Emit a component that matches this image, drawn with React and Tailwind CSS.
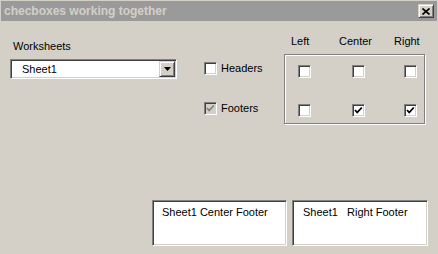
const sunken =
  "border border-t-[#808080] border-l-[#808080] border-b-white border-r-white shadow-[inset_1px_1px_0_#404040,inset_-1px_-1px_0_#d4d0c8]";
const raised =
  "border border-t-[#d4d0c8] border-l-[#d4d0c8] border-b-[#404040] border-r-[#404040] shadow-[inset_1px_1px_0_#ffffff,inset_-1px_-1px_0_#808080]";

const Check = ({ color = "#000" }) => (
  <svg width="9" height="9" viewBox="0 0 9 9" className="block">
    <polyline points="1,4 3.2,6.5 7.8,1.5" fill="none" stroke={color} strokeWidth="1.8" />
  </svg>
);

const Checkbox = ({ checked, disabled }) => (
  <div
    className={`flex h-[13px] w-[13px] shrink-0 items-center justify-center box-border ${sunken} ${
      disabled ? "bg-[#d4d0c8]" : "bg-white"
    }`}
  >
    {checked && <Check color={disabled ? "#808080" : "#000"} />}
  </div>
);

export default function App() {
  return (
    <div
      className="flex h-[254px] w-[438px] flex-col bg-[#d4d0c8] text-[11px] leading-[13px] text-black"
      style={{ fontFamily: '"Liberation Sans", Arial, sans-serif' }}
    >
      <div className="mx-[1px] mt-[1px] flex h-[20px] items-center justify-between bg-[#9a9a9a] pl-[3px] pr-[3px]">
        <span className="text-[12px] font-bold text-[#d4d0c8]">checboxes working together</span>
        <button type="button" className={`flex h-[14px] w-[16px] items-center justify-center bg-[#d4d0c8] box-border ${raised}`}>
          <svg width="8" height="7" viewBox="0 0 8 7" className="block">
            <path d="M0.5 0.5 L7.5 6.5 M7.5 0.5 L0.5 6.5" stroke="#000" strokeWidth="1.6" />
          </svg>
        </button>
      </div>

      <div className="flex items-start">
        <div className="ml-[10px] mt-[19px] flex w-[167px] flex-col">
          <span className="ml-[3px]">Worksheets</span>
          <div className={`mt-[6px] flex h-[20px] items-center justify-between bg-white box-border pl-[11px] pr-[1px] ${sunken}`}>
            <span className="mt-[1px]">Sheet1</span>
            <div className={`flex h-[16px] w-[16px] items-center justify-center bg-[#d4d0c8] box-border ${raised}`}>
              <svg width="7" height="4" viewBox="0 0 7 4" className="block">
                <path d="M0 0 H7 L3.5 4 Z" fill="#000" />
              </svg>
            </div>
          </div>
        </div>

        <div className="ml-[27px] mt-[41px] flex w-[80px] flex-col gap-[27px]">
          <label className="flex items-center gap-[4px]">
            <Checkbox />
            <span>Headers</span>
          </label>
          <label className="flex items-center gap-[4px]">
            <Checkbox checked disabled />
            <span>Footers</span>
          </label>
        </div>

        <div className="mt-[14px] flex flex-col">
          <div className="flex h-[19px] pl-[7px]">
            <span className="w-[48px]">Left</span>
            <span className="w-[55px]">Center</span>
            <span>Right</span>
          </div>
          <div className="box-border h-[70px] w-[141px] border border-[#808080] pl-[13px] pt-[10px] shadow-[inset_1px_1px_0_#ffffff,1px_1px_0_#ffffff]">
            <div className="flex">
              <Checkbox />
              <div className="ml-[41px]"><Checkbox /></div>
              <div className="ml-[39px]"><Checkbox /></div>
            </div>
            <div className="mt-[26px] flex">
              <Checkbox />
              <div className="ml-[41px]"><Checkbox checked /></div>
              <div className="ml-[39px]"><Checkbox checked /></div>
            </div>
          </div>
        </div>
      </div>

      <div className="ml-[152px] mt-[76px] flex gap-[5px]">
        <div className={`h-[46px] w-[135px] bg-white box-border pl-[9px] pt-[5px] ${sunken}`}>Sheet1 Center Footer</div>
        <div className={`h-[46px] w-[136px] bg-white box-border pl-[10px] pt-[5px] whitespace-pre ${sunken}`}>
          {"Sheet1   Right Footer"}
        </div>
      </div>
    </div>
  );
}
